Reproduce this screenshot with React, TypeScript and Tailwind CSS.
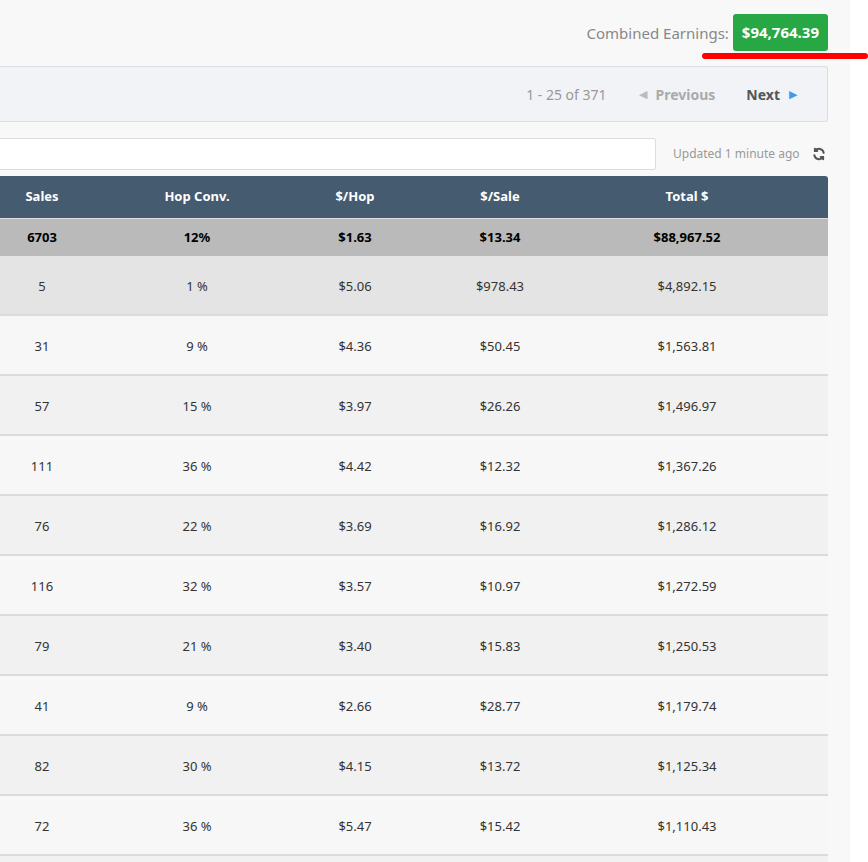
import React from "react";

const rows = [
  ["5", "1 %", "$5.06", "$978.43", "$4,892.15"],
  ["31", "9 %", "$4.36", "$50.45", "$1,563.81"],
  ["57", "15 %", "$3.97", "$26.26", "$1,496.97"],
  ["111", "36 %", "$4.42", "$12.32", "$1,367.26"],
  ["76", "22 %", "$3.69", "$16.92", "$1,286.12"],
  ["116", "32 %", "$3.57", "$10.97", "$1,272.59"],
  ["79", "21 %", "$3.40", "$15.83", "$1,250.53"],
  ["41", "9 %", "$2.66", "$28.77", "$1,179.74"],
  ["82", "30 %", "$4.15", "$13.72", "$1,125.34"],
  ["72", "36 %", "$5.47", "$15.42", "$1,110.43"],
];
const cols = "grid grid-cols-[84px_226px_90px_200px_174px_54px]";

export default function App() {
  return (
    <div className="w-[868px] h-[862px] overflow-hidden bg-white text-[#333]" style={{ fontFamily: '"Noto Sans", "Open Sans", sans-serif' }}>
      <div className="w-[850px] h-full bg-[#f8f8f8]">
        <div className="h-[66px] flex items-start justify-end pr-[22px] pt-[14px] relative">
          <span className="text-[15px] text-[#888] mt-[8px] mr-[4px]">Combined Earnings:</span>
          <span className="bg-[#28a745] text-white font-bold text-[15px] rounded-[3px] px-[9px] h-[37px] flex items-center">$94,764.39</span>
          <div className="absolute left-[702px] top-[53px] w-[166px] h-[6px] rounded-full bg-[#ff0000]" />
        </div>
        <div className="w-[828px] h-[56px] bg-[#f1f3f7] border border-[#dcdde2] border-l-0 rounded-r-[3px] flex items-center justify-end pr-[30px] text-[14px]">
          <span className="text-[#999] mr-[32px]">1 - 25 of 371</span>
          <span className="text-[#bbb] mr-[9px] text-[11px]">◀</span>
          <span className="text-[#aaa] font-bold mr-[31px]">Previous</span>
          <span className="text-[#555] font-bold mr-[9px]">Next</span>
          <span className="text-[#3d9cf0] text-[11px]">▶</span>
        </div>
        <div className="h-[54px] flex items-start pt-[16px]">
          <div className="w-[656px] h-[32px] bg-white border border-[#dcdde2] border-l-0 rounded-r-[3px]" />
          <span className="text-[12px] text-[#999] ml-[17px] mt-[7px]">Updated 1 minute ago</span>
          <svg className="ml-[12px] mt-[9px]" width="14" height="14" viewBox="0 0 24 24" fill="none" stroke="#555" strokeWidth="3.5" strokeLinecap="round">
            <path d="M20 10a8 8 0 0 0-14.5-3.5M4 14a8 8 0 0 0 14.5 3.5" />
            <path d="M5 3v4h4M19 21v-4h-4" />
          </svg>
        </div>
        <div className="w-[828px] text-[13px]">
          <div className={`${cols} h-[42px] bg-[#455b6f] text-white font-bold items-center text-center rounded-tr-[3px]`}>
            <div>Sales</div><div>Hop Conv.</div><div>$/Hop</div><div>$/Sale</div><div>Total $</div><div />
          </div>
          <div className={`${cols} h-[38px] bg-[#bababa] text-black font-bold items-center text-center border-t border-[#ddd]`}>
            <div>6703</div><div>12%</div><div>$1.63</div><div>$13.34</div><div>$88,967.52</div><div />
          </div>
          {rows.map((r, i) => (
            <div key={i} className={`${cols} h-[60px] items-center pt-[4px] text-center border-b-2 border-[#dadbdf] ${i === 0 ? "bg-[#e4e4e4]" : i % 2 ? "bg-[#f7f7f7]" : "bg-[#f1f1f1]"}`}>
              {r.map((c, j) => <div key={j}>{c}</div>)}<div />
            </div>
          ))}
          <div className="h-[10px] bg-[#f1f1f1]" />
        </div>
      </div>
    </div>
  );
}
